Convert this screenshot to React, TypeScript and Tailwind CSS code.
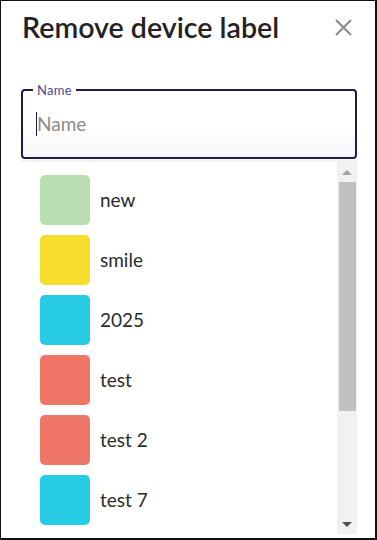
const labels = [
  { name: "new", color: "#b9dfb3" },
  { name: "smile", color: "#f6dc2b" },
  { name: "2025", color: "#27cce4" },
  { name: "test", color: "#ef7666" },
  { name: "test 2", color: "#ef7666" },
  { name: "test 7", color: "#27cce4" },
];

export default function App() {
  return (
    <div
      className="w-[377px] h-[540px] bg-white border-l border-t border-r-2 border-b-2 border-[#111] overflow-hidden flex flex-col"
      style={{ fontFamily: "Lato, 'Open Sans', sans-serif" }}
    >
      <div className="flex items-center justify-between pl-[21px] pr-[23px] pt-[9px]">
        <h1 className="text-[28.6px] leading-[34px] font-semibold text-[#222]">Remove device label</h1>
        <svg width="17" height="17" viewBox="0 0 17 17" className="text-[#8a8a8a]">
          <path d="M1 1L16 16M16 1L1 16" stroke="currentColor" strokeWidth="2" />
        </svg>
      </div>

      <div className="relative ml-[20px] mr-[18px] mt-[45px] h-[70px] rounded-[4px] border-2 border-[#1f1b4d] bg-gradient-to-b from-white via-white to-[#f6f6f6] flex items-center pl-[13px]">
        <span className="absolute left-[10px] -top-[9px] bg-white px-[4px] text-[13px] leading-[16px] text-[#4b4a8c] tracking-[0.3px]">
          Name
        </span>
        <div className="w-px h-[24px] bg-[#1f1b4d]" />
        <span className="text-[19px] text-[#8a8a8a] leading-[24px]">Name</span>
      </div>

      <div className="ml-[20px] mr-[18px] mt-px h-[374px] flex border-t-2 border-[#f1f1f1]">
        <div className="flex-1 overflow-hidden pl-[19px] pt-[13px] flex flex-col gap-[10px]">
          {labels.map((l) => (
            <div key={l.name} className="flex items-center gap-[10px] shrink-0">
              <div className="w-[50px] h-[50px] rounded-[5px]" style={{ backgroundColor: l.color }} />
              <span className="text-[19px] text-[#2b2b2b]">{l.name}</span>
            </div>
          ))}
        </div>
        <div className="w-[20px] bg-[#f1f1f1] flex flex-col">
          <div className="h-[20px] flex items-center justify-center">
            <div className="w-0 h-0 border-l-[5px] border-r-[5px] border-b-[5px] border-l-transparent border-r-transparent border-b-[#a3a3a3]" />
          </div>
          <div className="ml-[2px] mr-px h-[229px] bg-[#c1c1c1]" />
          <div className="flex-1" />
          <div className="h-[20px] flex items-center justify-center">
            <div className="w-0 h-0 border-l-[5px] border-r-[5px] border-t-[5px] border-l-transparent border-r-transparent border-t-[#505050]" />
          </div>
        </div>
      </div>
    </div>
  );
}
